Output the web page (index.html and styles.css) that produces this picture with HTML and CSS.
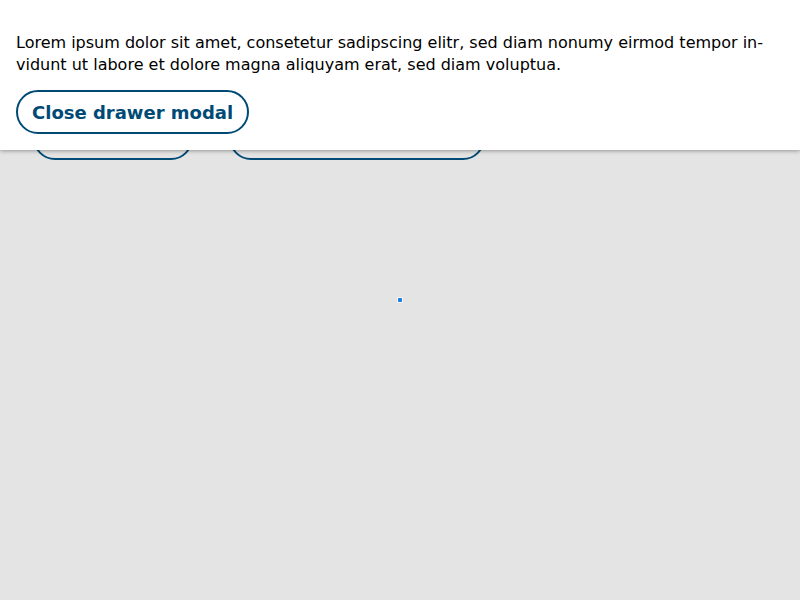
FILE: index.html
```html
<!DOCTYPE html>
<html lang="en">
<head>
<meta charset="utf-8">
<link rel="stylesheet" href="styles.css">
</head>
<body>
<div class="page">
  <div class="toolbar">
    <button class="btn btn-a">Open drawer</button>
    <button class="btn btn-b">Open drawer with long content</button>
  </div>
  <div class="dot"></div>
</div>
<div class="drawer">
  <p class="text">Lorem ipsum dolor sit amet, consetetur sadipscing elitr, sed diam nonumy eirmod tempor in&shy;vidunt ut labore et dolore magna aliquyam erat, sed diam voluptua.</p>
  <button class="btn">Close drawer modal</button>
</div>
</body>
</html>
```
FILE: styles.css
```css
html, body {
  margin: 0;
  padding: 0;
  height: 100%;
}
body {
  background: #e4e4e4;
  font-family: "DejaVu Sans", Verdana, sans-serif;
  color: #000;
  position: relative;
  overflow: hidden;
}
.page {
  height: 100%;
  display: flex;
  flex-direction: column;
}
.toolbar {
  display: flex;
  gap: 36px;
  padding: 116px 0 0 33px;
}
.btn {
  box-sizing: border-box;
  height: 44px;
  border: 2px solid #004a75;
  border-radius: 22px;
  background: #fff;
  color: #004a75;
  font-family: "DejaVu Sans", Verdana, sans-serif;
  font-weight: bold;
  font-size: 18px;
  padding: 0 14px;
  white-space: nowrap;
}
.btn-a { width: 160px; background: transparent; }
.btn-b { width: 256px; background: transparent; }
.dot {
  position: absolute;
  left: 398px;
  top: 298px;
  width: 4px;
  height: 4px;
  border-radius: 1px;
  background: #1a7fe8;
  box-shadow: 0 0 0 1px rgba(255,255,255,0.7);
}
.drawer {
  position: absolute;
  left: 0;
  top: 0;
  right: 0;
  height: 150px;
  box-sizing: border-box;
  background: #fff;
  padding: 32px 16px 16px;
  box-shadow: 0 1px 4px rgba(0,0,0,0.35);
}
.text {
  margin: 0 0 14px;
  font-size: 16px;
  line-height: 22px;
  hyphens: manual;
}
```
